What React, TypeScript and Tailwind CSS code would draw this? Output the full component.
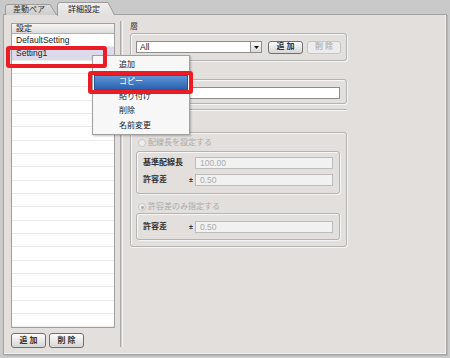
import React from "react";

const FONT = "font-['Liberation_Sans','Noto_Sans_CJK_JP',sans-serif]";

function Btn({ label, disabled, h = "h-[15px]", w = "w-[35px]" }: { label: string; disabled?: boolean; h?: string; w?: string }) {
  return (
    <div
      className={`${h} ${w} flex items-center justify-center rounded-[3px] border text-[8px] font-bold tracking-[2px] pl-[2px] ${
        disabled
          ? "border-[#c6c6c6] bg-[#ececec] text-[#b8b8b8]"
          : "border-[#6f6f6f] bg-gradient-to-b from-[#fdfdfd] to-[#d6d6d6] text-[#333] shadow-[inset_0_1px_0_#fff]"
      }`}
    >
      {label}
    </div>
  );
}

function DisabledInput({ value, w = "w-[138px]" }: { value: string; w?: string }) {
  return (
    <div className={`${w} h-[12px] border border-[#bcbcbc] bg-[#f1f1f1] pl-[4px] text-[8.5px] leading-[10px] text-[#ababab]`}>
      {value}
    </div>
  );
}

function Radio({ checked, label }: { checked?: boolean; label: string }) {
  return (
    <div className="h-[10px] flex items-center pl-[7px]">
      <div className="w-[8px] h-[8px] rounded-full border border-[#c8c8c8] bg-[#ededed] flex items-center justify-center">
        {checked && <div className="w-[3px] h-[3px] rounded-full bg-[#a8a8a8]" />}
      </div>
      <span className="ml-[2px] text-[8px] text-[#ababab] leading-[10px]">{label}</span>
    </div>
  );
}

const groupCls =
  "rounded-[3px] border border-[#b3b3b3] shadow-[inset_1px_1px_0_#f7f7f7,1px_1px_0_#f4f4f4]";

export default function App() {
  const rows = Array.from({ length: 22 });
  return (
    <div className={`relative w-[450px] h-[358px] overflow-hidden bg-[#c9c9c9] ${FONT} text-[8px] text-[#1c1c1c]`}>
      {/* tab strip */}
      <div className="h-[16px] flex items-end pl-[5px]">
        <div className="relative w-[52px] h-[11px] mb-[1px]">
          <svg className="absolute inset-0" width="52" height="11" viewBox="0 0 52 11">
            <defs>
              <linearGradient id="t1" x1="0" y1="0" x2="0" y2="1">
                <stop offset="0" stopColor="#dedede" />
                <stop offset="1" stopColor="#cdcdcd" />
              </linearGradient>
            </defs>
            <path d="M0.5,11 L0.5,3 Q0.5,0.5 3,0.5 L45,0.5 L51.5,11" fill="url(#t1)" stroke="#9a9a9a" />
          </svg>
          <div className="relative h-[11px] pl-[8px] leading-[11px] text-[8px] text-[#333]">差動ペア</div>
        </div>
        <div className="relative z-10 w-[58px] h-[14px]">
          <svg className="absolute inset-0" width="58" height="14" viewBox="0 0 58 14">
            <defs>
              <linearGradient id="t2" x1="0" y1="0" x2="0" y2="1">
                <stop offset="0" stopColor="#efefef" />
                <stop offset="1" stopColor="#e2dfdd" />
              </linearGradient>
            </defs>
            <path d="M0.5,14 L0.5,3 Q0.5,0.5 3,0.5 L51,0.5 L57.5,13 L57.5,14 Z" fill="url(#t2)" stroke="none" />
            <path d="M0.5,14 L0.5,3 Q0.5,0.5 3,0.5 L51,0.5 L57.5,13" fill="none" stroke="#9a9a9a" />
          </svg>
          <div className="relative h-[13px] pl-[11px] pt-[2px] leading-[11px] text-[8px] text-[#222]">詳細設定</div>
        </div>
      </div>

      {/* main panel */}
      <div className="-mt-[2px] ml-[3px] w-[444px] h-[341px] border border-[#a3a3a3] bg-[#e2dfdd] shadow-[inset_-1px_-1px_0_#f2f2f2,1px_1px_0_#b7b7b7] flex pl-[7px] pt-[8px]">
        {/* left column */}
        <div className="w-[104px] flex flex-col">
          <div className="h-[305px] border border-[#9f9f9f] bg-white overflow-hidden">
            <div className="h-[10px] bg-gradient-to-b from-[#f6f6f6] to-[#dcdcdc] border-b border-[#b3b3b3] pl-[4px] leading-[9px] text-[8px]">
              設定
            </div>
            {rows.map((_, i) => (
              <div
                key={i}
                className={`h-[13.33px] border-b border-[#ececec] pl-[4px] leading-[12px] text-[8.5px] ${
                  i === 1 ? "bg-[#dbdbeb]" : ""
                }`}
              >
                {i === 0 ? "DefaultSetting" : i === 1 ? "Setting1" : ""}
              </div>
            ))}
          </div>
          <div className="mt-[5px] flex gap-[3px]">
            <Btn label="追加" />
            <Btn label="削除" />
          </div>
        </div>

        {/* separator */}
        <div className="ml-[5px] -mt-[2px] h-[326px] w-[3px] border-l border-[#a9a9a9] bg-[#d2cfcd] border-r border-r-[#f4f4f4]" />

        {/* right column */}
        <div className="ml-[7px] w-[217px] flex flex-col">
          <div className="h-[10px] leading-[8px] text-[8px] text-[#333]">層</div>
          <div className={`${groupCls} h-[28px] flex items-center pl-[5px]`}>
            <div className="flex h-[12px] w-[126px]">
              <div className="w-[115px] h-[12px] border border-[#8c8c8c] bg-white pl-[3px] text-[8.5px] leading-[10px]">All</div>
              <div className="w-[11px] h-[12px] border border-l-0 border-[#8c8c8c] bg-gradient-to-b from-[#fafafa] to-[#dadada] flex items-center justify-center">
                <svg width="5" height="3" viewBox="0 0 5 3">
                  <path d="M0,0 L5,0 L2.5,3 Z" fill="#111" />
                </svg>
              </div>
            </div>
            <div className="ml-[6px]">
              <Btn label="追加" h="h-[13px]" />
            </div>
            <div className="ml-[4px]">
              <Btn label="削除" disabled h="h-[13px]" w="w-[34px]" />
            </div>
          </div>

          <div className="h-[18px]" />
          <div className={`${groupCls} h-[25px] pl-[6px] pt-[7px]`}>
            <div className="w-[203px] h-[12px] border border-[#8c8c8c] bg-white" />
          </div>

          <div className="mt-[5px] h-[2px] border-t border-[#b3b3b3] border-b border-b-[#f7f7f7]" />

          <div className="h-[21px]" />
          <div className={`${groupCls} h-[115px] flex flex-col`}>
            <div className="mt-[5px]">
              <Radio label="配線長を設定する" />
            </div>
            <div className={`${groupCls} mt-[3px] ml-[5px] mr-[6px] h-[43px] pl-[6px] pt-[5px] flex flex-col gap-[5px]`}>
              <div className="flex items-center h-[12px]">
                <span className="w-[46px] font-bold text-[8px] text-[#333]">基準配線長</span>
                <span className="w-[6px]" />
                <DisabledInput value="100.00" />
              </div>
              <div className="flex items-center h-[12px]">
                <span className="w-[46px] font-bold text-[8px] text-[#333]">許容差</span>
                <span className="w-[6px] font-bold text-[7px] text-[#333]">±</span>
                <DisabledInput value="0.50" />
              </div>
            </div>
            <div className="mt-[8px]">
              <Radio checked label="許容差のみ指定する" />
            </div>
            <div className={`${groupCls} mt-[1px] ml-[5px] mr-[6px] h-[27px] pl-[6px] pt-[7px]`}>
              <div className="flex items-center h-[12px]">
                <span className="w-[46px] font-bold text-[8px] text-[#333]">許容差</span>
                <span className="w-[6px] font-bold text-[7px] text-[#333]">±</span>
                <DisabledInput value="0.50" />
              </div>
            </div>
          </div>
        </div>
      </div>

      {/* context menu */}
      <div className="absolute left-[92px] top-[55px] w-[98px] h-[80px] border border-[#a0a0a0] bg-[#f7f7f7] shadow-[1px_1px_2px_rgba(0,0,0,0.25)] pt-[2px]">
        <div className="h-[14px] pl-[26px] leading-[14px] text-[8px]">追加</div>
        <div className="mt-[3px] mx-[1px] h-[14.5px] border border-[#2a5699] bg-gradient-to-b from-[#5d95d6] to-[#2c62b0] pl-[24px] leading-[12.5px] text-[8px] text-white">
          コピー
        </div>
        <div className="h-[14.5px] pl-[26px] leading-[14.5px] text-[8px]">貼り付け</div>
        <div className="h-[14.5px] pl-[26px] leading-[14.5px] text-[8px]">削除</div>
        <div className="h-[14.5px] pl-[26px] leading-[14.5px] text-[8px]">名前変更</div>
      </div>

      {/* red highlight boxes */}
      <div className="absolute left-[6px] top-[46px] w-[101px] h-[22px] border-[4px] border-[#ec1c24] rounded-[3px]" />
      <div className="absolute left-[88px] top-[71px] w-[105px] h-[23px] border-[4px] border-[#ec1c24] rounded-[3px]" />
    </div>
  );
}
